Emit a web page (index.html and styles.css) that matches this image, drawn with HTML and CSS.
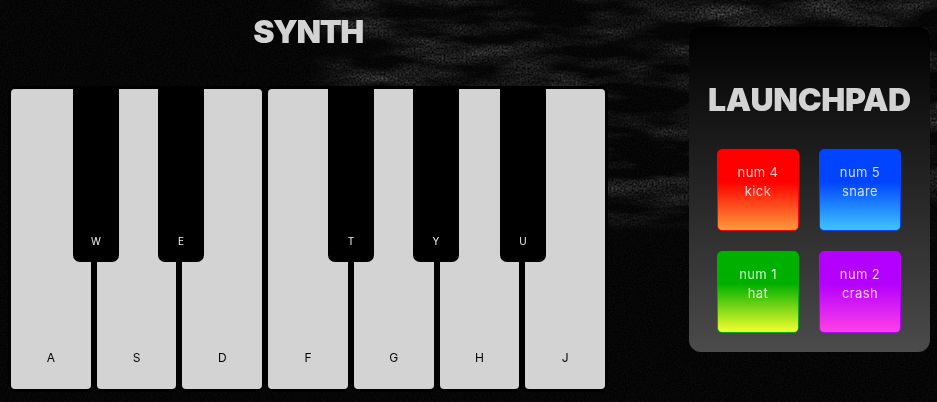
FILE: index.html
```html
<!DOCTYPE html>
<html lang="en">
<head>
	<meta charset="UTF-8">
	<title>Synth</title>
	<link rel="stylesheet" href="styles.css">
</head>
<body>
	<svg class="grain" width="937" height="402" aria-hidden="true">
		<defs>
			<filter id="smear" x="0" y="0" width="100%" height="100%" color-interpolation-filters="sRGB">
				<feTurbulence type="fractalNoise" baseFrequency="0.01 0.045" numOctaves="4" seed="7" result="wide"/>
				<feColorMatrix in="wide" type="matrix" values="0 0 0 0 1  0 0 0 0 1  0 0 0 0 1  2.4 0 0 0 -0.95" result="patch"/>
				<feTurbulence type="fractalNoise" baseFrequency="0.5" numOctaves="2" seed="11"/>
				<feColorMatrix type="matrix" values="0 0 0 0 1  0 0 0 0 1  0 0 0 0 1  1.6 0 0 0 -0.3" result="fine"/>
				<feComposite in="patch" in2="fine" operator="in"/>
				<feGaussianBlur stdDeviation="0.6"/>
			</filter>
			<filter id="speck" x="0" y="0" width="100%" height="100%" color-interpolation-filters="sRGB">
				<feTurbulence type="fractalNoise" baseFrequency="0.7" numOctaves="2" seed="3"/>
				<feColorMatrix type="matrix" values="0 0 0 0 1  0 0 0 0 1  0 0 0 0 1  2.4 0 0 0 -0.9"/>
			</filter>
			<filter id="soft">
				<feGaussianBlur stdDeviation="14"/>
			</filter>
			<mask id="upper-right" maskUnits="userSpaceOnUse" x="0" y="0" width="937" height="402">
				<rect x="325" y="-40" width="700" height="262" fill="#fff" filter="url(#soft)"/>
			</mask>
		</defs>
		<rect width="937" height="402" fill="#030303"/>
		<rect width="937" height="402" filter="url(#smear)" mask="url(#upper-right)" opacity="0.3"/>
		<rect width="937" height="402" filter="url(#speck)" opacity="0.035"/>
	</svg>

	<main class="stage">
		<section class="synth">
			<h1 class="title">SYNTH</h1>
			<div class="keyboard">
				<div class="key">A</div>
				<div class="key">S</div>
				<div class="key">D</div>
				<div class="key">F</div>
				<div class="key">G</div>
				<div class="key">H</div>
				<div class="key">J</div>
				<div class="sharp sharp-w">W</div>
				<div class="sharp sharp-e">E</div>
				<div class="sharp sharp-t">T</div>
				<div class="sharp sharp-y">Y</div>
				<div class="sharp sharp-u">U</div>
			</div>
		</section>

		<section class="launchpad">
			<h2 class="pad-title">LAUNCHPAD</h2>
			<div class="pads">
				<div class="pad pad-red">num 4<br>kick</div>
				<div class="pad pad-blue">num 5<br>snare</div>
				<div class="pad pad-green">num 1<br>hat</div>
				<div class="pad pad-purple">num 2<br>crash</div>
			</div>
		</section>
	</main>
</body>
</html>
```

FILE: styles.css
```css
*{
	margin: 0;
	padding: 0;
	box-sizing: border-box;
}
html{
	height: 100%;
	overflow: hidden;
	background: #030303;
	font-family: "Inter", "Liberation Sans", sans-serif;
}
.grain{
	position: fixed;
	top: 0;
	left: 0;
	z-index: -1;
}
.stage{
	display: flex;
	align-items: flex-start;
	padding-left: 8px;
	/* own layer, keeps the text on greyscale antialiasing */
	will-change: transform;
}
.synth{
	width: 600px;
	display: flex;
	flex-direction: column;
}
.title{
	height: 86px;
	padding-top: 12px;
	text-align: center;
	font-size: 32px;
	line-height: 40px;
	font-weight: 900;
	letter-spacing: -1.4px;
	color: #d3d3d3;
}
.keyboard{
	position: relative;
	display: flex;
	width: 600px;
	height: 306px;
}
.key{
	flex: 1;
	display: flex;
	align-items: flex-end;
	justify-content: center;
	padding-bottom: 23px;
	background: #d3d3d3;
	border: 3px solid #000;
	border-radius: 7px;
	font-size: 12px;
	line-height: 16px;
	color: #000;
}
.sharp{
	position: absolute;
	top: 0;
	width: 46px;
	height: 176px;
	display: flex;
	align-items: flex-end;
	justify-content: center;
	padding-bottom: 14px;
	background: #000;
	border-radius: 0 0 7px 7px;
	font-size: 10px;
	line-height: 14px;
	color: #eee;
}
.sharp-w{ left: 65px; }
.sharp-e{ left: 150px; }
.sharp-t{ left: 320px; }
.sharp-y{ left: 405px; }
.sharp-u{ left: 492px; }

.launchpad{
	width: 241px;
	height: 325px;
	margin: 27px 0 0 81px;
	padding-top: 53px;
	background: linear-gradient(#000, #4b4b4b);
	border-radius: 12px;
}
.pad-title{
	text-align: center;
	font-size: 32px;
	line-height: 40px;
	font-weight: 900;
	letter-spacing: -0.25px;
	color: #d3d3d3;
}
.pads{
	display: grid;
	grid-template-columns: 82px 82px;
	gap: 20px;
	margin: 29px 0 0 28px;
}
.pad{
	height: 82px;
	padding-top: 13px;
	border: 1px solid;
	border-radius: 5px;
	text-align: center;
	font-size: 13px;
	line-height: 19px;
	letter-spacing: 0.4px;
	color: rgba(255, 255, 255, 0.8);
}
.pad-red{
	border-color: #f00;
	background: linear-gradient(#f00 40%, #ff9a3c);
}
.pad-blue{
	border-color: #0044ff;
	background: linear-gradient(#0044ff 40%, #3fc4ff);
}
.pad-green{
	border-color: #00b000;
	background: linear-gradient(#00b000 40%, #f5ff30);
}
.pad-purple{
	border-color: #b400ff;
	background: linear-gradient(#b400ff 40%, #ff40e6);
}
```
